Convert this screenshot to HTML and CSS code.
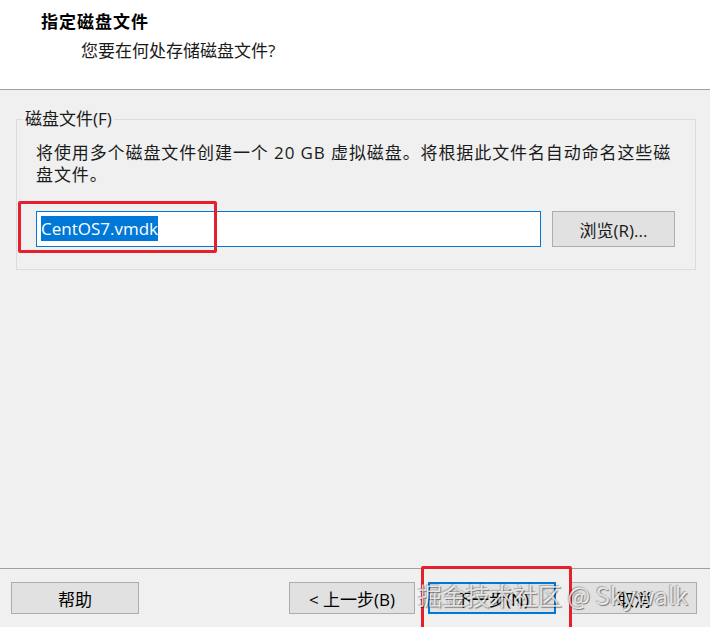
FILE: index.html
```html
<!DOCTYPE html>
<html lang="zh-CN">
<head>
  <meta charset="UTF-8">
  <meta name="viewport" content="width=device-width, initial-scale=1.0">
  <title>新建虚拟机向导</title>
  <link rel="stylesheet" href="styles.css">
</head>
<body>
  <div class="wizard">
    <header class="wizard-head">
      <h1>指定磁盘文件</h1>
      <p>您要在何处存储磁盘文件?</p>
    </header>

    <main class="wizard-body">
      <fieldset class="group">
        <legend>磁盘文件(F)</legend>
        <p class="desc">将使用多个磁盘文件创建一个 20 GB 虚拟磁盘。将根据此文件名自动命名这些磁盘文件。</p>
        <div class="file-row">
          <div class="file-input"><span class="selected">CentOS7.vmdk</span></div>
          <button class="btn browse">浏览(R)...</button>
          <!-- highlight frame around the file name -->
          <div class="mark mark-input"></div>
        </div>
      </fieldset>
    </main>

    <footer class="wizard-foot">
      <button class="btn help">帮助</button>
      <div class="nav">
        <button class="btn">&lt; 上一步(B)</button>
        <button class="btn primary">下一步(N)</button>
        <button class="btn">取消</button>
      </div>
      <div class="mark mark-next"></div>
      <div class="watermark">掘金技术社区 @ Skywalk</div>
    </footer>
  </div>
</body>
</html>
```

FILE: styles.css
```css
* {
  box-sizing: border-box;
}

body {
  margin: 0;
  font-family: "Open Sans", "Noto Sans CJK SC", sans-serif;
  font-size: 17px;
  color: #000;
  background-color: #f0f0f0;
}

.wizard {
  width: 710px;
  height: 627px;
  display: flex;
  flex-direction: column;
  overflow: hidden;
}

.wizard-head {
  height: 90px;
  background-color: #fff;
  border-bottom: 1px solid #a0a0a0;
  padding: 9px 0 0 41px;
}

.wizard-head h1 {
  margin: 0;
  font-size: 17px;
  font-weight: bold;
  line-height: 26px;
  letter-spacing: 1px;
}

.wizard-head p {
  margin: 3px 0 0 40px;
  line-height: 26px;
  color: #1a1a1a;
}

.wizard-body {
  flex: 1;
  padding: 18px 15px 0 16px;
}

.group {
  margin: 0;
  height: 162px;
  border: 1px solid #dcdcdc;
  padding: 0 20px 0 19px;
}

.group legend {
  margin-left: -13px;
  padding: 0 2px;
  line-height: 22px;
  color: #1a1a1a;
}

.desc {
  margin: 12px 0 0 0;
  line-height: 22px;
  color: #1a1a1a;
  letter-spacing: 0.9px;
}

.file-row {
  position: relative;
  display: flex;
  gap: 11px;
  margin-top: 25px;
}

.file-input {
  width: 505px;
  height: 36px;
  background-color: #fff;
  border: 1px solid #0078d7;
  padding: 2px 0 0 4px;
  line-height: 29px;
}

.selected {
  background-color: #0078d7;
  color: #fff;
  padding: 1px 0;
}

.btn {
  height: 32px;
  background-color: #e1e1e1;
  border: 1px solid #adadad;
  font-family: inherit;
  font-size: 17px;
  color: #000;
  padding: 0;
}

.browse {
  width: 123px;
  height: 36px;
  color: #1a1a1a;
}

.wizard-foot {
  position: relative;
  height: 59px;
  border-top: 1px solid #a0a0a0;
  display: flex;
  justify-content: space-between;
  align-items: flex-start;
  padding: 13px 13px 0 11px;
}

.help {
  width: 128px;
}

.nav {
  display: flex;
  gap: 13px;
}

.nav .btn {
  width: 126px;
}

.nav .primary {
  width: 128px;
  border: 2px solid #0078d7;
  margin-right: 2px;
}

/* red annotation frames */
.mark {
  position: absolute;
  border: 3px solid #e5202d;
  border-radius: 2px;
}

.mark-input {
  left: -18px;
  top: -10px;
  width: 199px;
  height: 52px;
}

.mark-next {
  left: 421px;
  top: -3px;
  width: 151px;
  height: 70px;
}

.watermark {
  position: absolute;
  left: 418px;
  top: 10px;
  font-family: "Noto Sans CJK SC", "Open Sans", sans-serif;
  font-size: 24px;
  line-height: 32px;
  color: rgba(255, 255, 255, 0.75);
  text-shadow: 1px 1px 1px rgba(0, 0, 0, 0.45), -1px -1px 1px rgba(0, 0, 0, 0.25);
  white-space: nowrap;
  pointer-events: none;
}
```
